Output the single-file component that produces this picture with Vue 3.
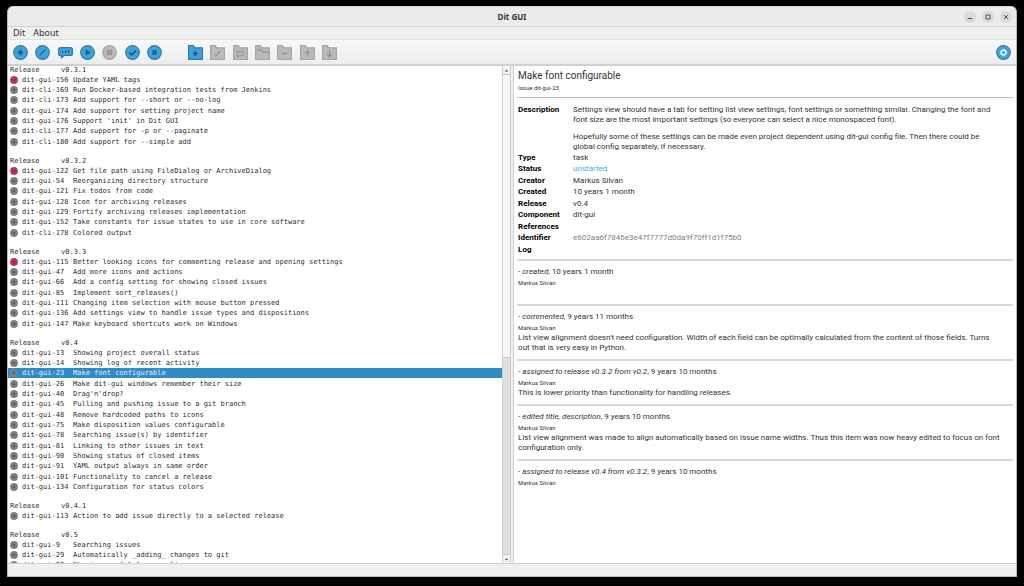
<script setup>
import { ref } from 'vue'

const selected = ref('dit-gui-23')

const releases = [
  { name: 'v0.3.1', issues: [
    ['dit-gui-156', 'Update YAML tags', true],
    ['dit-cli-169', 'Run Docker-based integration tests from Jenkins'],
    ['dit-cli-173', 'Add support for --short or --no-log'],
    ['dit-gui-174', 'Add support for setting project name'],
    ['dit-gui-176', "Support 'init' in Dit GUI"],
    ['dit-cli-177', 'Add support for -p or --paginate'],
    ['dit-cli-180', 'Add support for --simple add']
  ] },
  { name: 'v0.3.2', issues: [
    ['dit-gui-122', 'Get file path using FileDialog or ArchiveDialog', true],
    ['dit-gui-54', 'Reorganizing directory structure'],
    ['dit-gui-121', 'Fix todos from code'],
    ['dit-gui-128', 'Icon for archiving releases'],
    ['dit-gui-129', 'Fortify archiving releases implementation'],
    ['dit-gui-152', 'Take constants for issue states to use in core software'],
    ['dit-cli-178', 'Colored output']
  ] },
  { name: 'v0.3.3', issues: [
    ['dit-gui-115', 'Better looking icons for commenting release and opening settings', true],
    ['dit-gui-47', 'Add more icons and actions'],
    ['dit-gui-66', 'Add a config setting for showing closed issues'],
    ['dit-gui-85', 'Implement sort_releases()'],
    ['dit-gui-111', 'Changing item selection with mouse button pressed'],
    ['dit-gui-136', 'Add settings view to handle issue types and dispositions'],
    ['dit-gui-147', 'Make keyboard shortcuts work on Windows']
  ] },
  { name: 'v0.4', issues: [
    ['dit-gui-13', 'Showing project overall status'],
    ['dit-gui-14', 'Showing log of recent activity'],
    ['dit-gui-23', 'Make font configurable'],
    ['dit-gui-26', 'Make dit-gui windows remember their size'],
    ['dit-gui-40', "Drag'n'drop?"],
    ['dit-gui-45', 'Pulling and pushing issue to a git branch'],
    ['dit-gui-48', 'Remove hardcoded paths to icons'],
    ['dit-gui-75', 'Make disposition values configurable'],
    ['dit-gui-78', 'Searching issue(s) by identifier'],
    ['dit-gui-81', 'Linking to other issues in text'],
    ['dit-gui-90', 'Showing status of closed items'],
    ['dit-gui-91', 'YAML output always in same order'],
    ['dit-gui-101', 'Functionality to cancel a release'],
    ['dit-gui-134', 'Configuration for status colors']
  ] },
  { name: 'v0.4.1', issues: [
    ['dit-gui-113', 'Action to add issue directly to a selected release']
  ] },
  { name: 'v0.5', issues: [
    ['dit-gui-9', 'Searching issues'],
    ['dit-gui-29', 'Automatically _adding_ changes to git'],
    ['dit-gui-30', 'Showing useful log any lines']
  ] }
]

const fields = [
  ['Type', 'task'],
  ['Status', 'unstarted', 'link'],
  ['Creator', 'Markus Silvan'],
  ['Created', '10 years 1 month'],
  ['Release', 'v0.4'],
  ['Component', 'dit-gui'],
  ['References', ''],
  ['Identifier', 'e602aa6f7846e3e47f7777d0da9f70ff1d1f75b0', 'muted'],
  ['Log', '']
]

const log = [
  { action: 'created', age: '10 years 1 month', text: '' },
  { action: 'commented', age: '9 years 11 months', text: "List view alignment doesn't need configuration. Width of each field can be optimally calculated from the content of those fields. Turns\nout that is very easy in Python." },
  { action: 'assigned to release v0.3.2 from v0.2', age: '9 years 10 months', text: 'This is lower priority than functionality for handling releases.' },
  { action: 'edited title, description', age: '9 years 10 months', text: 'List view alignment was made to align automatically based on issue name widths. Thus this item was now heavy edited to focus on font\nconfiguration only.' },
  { action: 'assigned to release v0.4 from v0.3.2', age: '9 years 10 months', text: '' }
]

const issueTools = [
  { label: 'New issue', d: 'M7.5 4.8v5.4M4.8 7.5h5.4', w: 2 },
  { label: 'Edit issue', d: 'M4.6 10.4l5.8-5.8', w: 1.3 },
  { label: 'Comment issue', bubble: true },
  { label: 'Start work', fill: 'M5.6 4.4l5.2 3.1-5.2 3.1z' },
  { label: 'Stop work', fill: 'M4.8 4.8h5.4v5.4H4.8z', off: true },
  { label: 'Close issue', d: 'M4.3 7.6l2.3 2.2 4.2-4.2', w: 1.8 },
  { label: 'Drop issue', d: 'M5.5 5.5l4 4M9.5 5.5l-4 4', w: 2 }
]

const releaseTools = [
  { label: 'New release', d: 'M7.5 5.8v5.4M4.8 8.5h5.4', w: 1.6, on: true },
  { label: 'Edit release', d: 'M5 11.3l5.5-5.5', w: 1.2 },
  { label: 'Comment release', d: 'M4 6.3h7v4.4H6.2L4.8 12v-1.3H4zM5.5 8.5h.8M7.1 8.5h.8M8.7 8.5h.8', w: 0.9 },
  { label: 'Release', d: 'M1.5 5.2h5l1.6 2h6', w: 1.2 },
  { label: 'Remove release', d: 'M4.8 8.5h5.4', w: 1.5 },
  { label: 'Move up', d: 'M7.5 11.8V6M5.2 8.1l2.3-2.3 2.3 2.3', w: 1.2 },
  { label: 'Move down', d: 'M7.5 5.6v5.8M5.2 9.3l2.3 2.3 2.3-2.3', w: 1.2 }
]
</script>

<template>
  <div class="desktop">
    <div class="window">
      <header class="titlebar">
        <h1>Dit GUI</h1>
        <div class="controls">
          <button type="button" aria-label="Minimize"><svg viewBox="0 0 12 12"><path d="M3.7 7.5h4.6" /></svg></button>
          <button type="button" aria-label="Maximize"><svg viewBox="0 0 12 12"><path d="M4 4h4v4H4z" /></svg></button>
          <button type="button" aria-label="Close"><svg viewBox="0 0 12 12"><path d="M4 4l4 4M8 4l-4 4" /></svg></button>
        </div>
      </header>

      <nav class="menubar">
        <button type="button">Dit</button>
        <button type="button">About</button>
      </nav>

      <div class="toolbar">
        <div class="tools">
          <button v-for="t in issueTools" :key="t.label" type="button" :aria-label="t.label" :disabled="t.off">
            <svg viewBox="0 0 15 15" :class="['round', { off: t.off }]">
              <template v-if="t.bubble">
                <path class="shape" d="M2.7 2.6h9.6q2.2 0 2.2 2.2v3.4q0 2.2-2.2 2.2H6.4l-3 2.3.3-2.3h-1Q.5 10.4.5 8.2V4.8Q.5 2.6 2.7 2.6z" />
                <path class="solid" d="M3.6 5.8h1.7v1.6H3.6zM6.7 5.8h1.7v1.6H6.7zM9.8 5.8h1.7v1.6H9.8z" />
              </template>
              <template v-else>
                <circle class="shape" cx="7.5" cy="7.5" r="6.8" />
                <path v-if="t.fill" class="solid" :d="t.fill" />
                <path v-else class="mark" :d="t.d" :stroke-width="t.w" />
              </template>
            </svg>
          </button>
        </div>
        <div class="tools">
          <button v-for="t in releaseTools" :key="t.label" type="button" :aria-label="t.label" :disabled="!t.on">
            <svg viewBox="0 0 15 15" :class="['folder', { off: !t.on }]">
              <path class="shape" d="M.6 14.4V.7h4.7l1.4 2.1h7.7v11.6z" />
              <path class="mark" :d="t.d" :stroke-width="t.w" />
            </svg>
          </button>
        </div>
        <button class="settings" type="button" aria-label="Settings">
          <svg viewBox="0 0 15 15" class="round">
            <circle class="shape" cx="7.5" cy="7.5" r="6.8" />
            <circle class="gear" cx="7.5" cy="7.5" r="2.3" stroke-width="1.5" />
            <circle class="gear" cx="7.5" cy="7.5" r="3.3" stroke-width="1" stroke-dasharray="1.4 1.19" />
          </svg>
        </button>
      </div>

      <main class="panes">
        <div class="list">
          <section v-for="r in releases" :key="r.name" class="group">
            <h2><span>Release</span>{{ r.name }}</h2>
            <ul>
              <li v-for="[id, title, started] in r.issues" :key="id">
                <button type="button" :class="['row', { current: id === selected }]" @click="selected = id">
                  <svg viewBox="0 0 8 8" :class="['dot', { started }]">
                    <circle cx="4" cy="4" r="3.9" />
                    <path v-if="started" d="M2.3 3h3.4M2.3 5h3.4" />
                    <path v-else d="M4 2.5v3M2.5 4h3" />
                  </svg>
                  <span class="id">{{ id }}</span>
                  <span>{{ title }}</span>
                </button>
              </li>
            </ul>
          </section>
        </div>

        <div class="scrollbar">
          <button type="button" aria-label="Scroll up"><svg viewBox="0 0 8 8"><path d="M2 5l2-2 2 2z" /></svg></button>
          <div class="track"><div class="thumb"></div></div>
          <button type="button" aria-label="Scroll down"><svg viewBox="0 0 8 8"><path d="M2 3l2 2 2-2z" /></svg></button>
        </div>
        <div class="splitter"></div>

        <article class="detail">
          <h2>Make font configurable</h2>
          <p class="issue">Issue dit-gui-23</p>
          <dl>
            <div class="description">
              <dt>Description</dt>
              <dd>
                <p>Settings view should have a tab for setting list view settings, font settings or something similar. Changing the font and<br>font size are the most important settings (so everyone can select a nice monospaced font).</p>
                <p>Hopefully some of these settings can be made even project dependent using dit-gui config file. Then there could be<br>global config separately, if necessary.</p>
              </dd>
            </div>
            <div v-for="[name, value, kind] in fields" :key="name">
              <dt>{{ name }}</dt>
              <dd :class="kind">{{ value }}</dd>
            </div>
          </dl>
          <section v-for="e in log" :key="e.action" class="entry">
            <p class="head">- <em>{{ e.action }}</em>, {{ e.age }}</p>
            <p class="author">Markus Silvan</p>
            <p class="body">{{ e.text }}</p>
          </section>
        </article>
      </main>

      <footer class="statusbar"></footer>
    </div>
  </div>
</template>

<style>
body {
  margin: 0;
  background: #000;
}
</style>

<style scoped>
* {
  box-sizing: border-box;
  margin: 0;
  padding: 0;
}

button {
  border: 0;
  background: none;
  color: inherit;
  font: inherit;
}

svg {
  display: block;
  fill: none;
}

ul {
  list-style: none;
}

.desktop {
  height: 100vh;
  padding: 6px 7px 9px;
  background: #000;
  color: #333;
  font: 8px/10px "Noto Sans", "Open Sans", sans-serif;
}

.window {
  display: flex;
  flex-direction: column;
  height: 100%;
  overflow: hidden;
  border: 1px solid #b8b8b8;
  border-top-color: #d8d8d8;
  border-radius: 6px 6px 0 0;
  background: #efefef;
}

.titlebar {
  display: grid;
  grid-template-columns: 1fr auto 1fr;
  align-items: center;
  height: 20px;
  border-bottom: 1px solid #d2d2d2;
  background: #ebebeb;
}

.titlebar h1 {
  grid-column: 2;
  font-size: 8px;
  font-weight: 700;
}

.controls {
  display: flex;
  justify-content: flex-end;
  gap: 6px;
  padding-right: 4px;
}

.controls button {
  width: 12px;
  height: 12px;
  border-radius: 50%;
  background: #dadada;
}

.controls path {
  stroke: #555;
  stroke-width: 1;
}

.menubar {
  display: flex;
  gap: 8px;
  height: 13px;
  padding-left: 5px;
  border-bottom: 1px solid #dedede;
  font-size: 9px;
  line-height: 12px;
}

.toolbar {
  display: flex;
  align-items: center;
  gap: 26px;
  height: 26px;
  padding: 0 5px;
  border-bottom: 2px solid #d0d0d0;
  background: linear-gradient(#f8f8f8, #ededed);
}

.tools {
  display: flex;
  justify-content: space-between;
  width: 149px;
}

.toolbar svg {
  width: 15px;
  height: 15px;
}

.settings {
  margin-left: auto;
}

.shape {
  fill: #3ca4dc;
  stroke: #2f7ba6;
  stroke-width: 1.2;
}

.mark {
  stroke: #205c80;
}

.solid {
  fill: #205c80;
}

.off .shape {
  fill: #bababa;
  stroke: #a6a6a6;
}

.off .mark {
  stroke: #929292;
}

.off .solid {
  fill: #999;
}

.gear {
  stroke: #e8f3fa;
}

.panes {
  display: grid;
  grid-template-columns: minmax(0, 63fr) 8px 4px minmax(0, 64fr);
  flex: 1;
  min-height: 0;
}

.list {
  overflow: hidden;
  background: #fff;
  color: #2e2e2e;
  font: 7px/10px "DejaVu Sans Mono", monospace;
}

.group {
  margin-bottom: 10px;
}

.group h2 {
  display: flex;
  padding-left: 2px;
  font: inherit;
  line-height: 9px;
}

.group h2 span {
  width: 51px;
}

.row {
  display: flex;
  align-items: center;
  width: 100%;
  height: 10px;
  padding-left: 2px;
  text-align: left;
  white-space: pre;
}

li:nth-child(3n) {
  padding-bottom: 1px;
}

.row.current {
  background: #308cc6;
  color: #e2eff8;
}

.dot {
  width: 8px;
  height: 8px;
  margin-right: 4px;
}

.dot circle {
  fill: #808080;
}

.dot path {
  stroke: #555;
  stroke-width: 1;
}

.dot.started circle {
  fill: #b83a5b;
}

.dot.started path {
  stroke: #852842;
}

.id {
  width: 51px;
}

.scrollbar {
  display: flex;
  flex-direction: column;
  border-left: 1px solid #cfcfcf;
  background: #f2f2f2;
}

.scrollbar button {
  width: 7px;
  height: 8px;
}

.scrollbar path {
  fill: #444;
}

.track {
  flex: 1;
  border: solid #c4c4c4;
  border-width: 1px 0;
  background: #e0e0e0;
}

.thumb {
  height: 59%;
  border-bottom: 1px solid #c4c4c4;
  background: linear-gradient(90deg, #fbfbfb, #f2f2f2);
}

.splitter {
  border: solid #cfcfcf;
  border-width: 0 1px;
}

.detail {
  overflow: hidden;
  padding: 3px 3px 0;
  background: #fff;
  font-family: Roboto, "Noto Sans", sans-serif;
}

.detail h2 {
  padding-left: 1px;
  font-size: 10px;
  font-weight: 400;
  line-height: 13px;
}

.issue {
  padding: 0 1px 3px;
  border-bottom: 1px solid #bdbdbd;
  font-size: 6px;
  line-height: 12px;
}

dl {
  padding: 7px 1px 4px;
}

dl > div {
  display: grid;
  grid-template-columns: 55px minmax(0, 1fr);
  line-height: 11px;
}

dl > div:nth-child(2n + 3) {
  padding-bottom: 1px;
}

dl > .description {
  line-height: 10px;
}

dt {
  color: #000;
  font-weight: 700;
}

dd p + p {
  margin-top: 7px;
}

.link {
  color: #3daef5;
}

.muted {
  color: #808080;
}

.entry {
  padding: 6px 1px;
  border-top: 2px solid #d8d8d8;
}

.author {
  font-size: 6px;
  line-height: 11px;
}

.body {
  min-height: 10px;
  white-space: pre-line;
}

.statusbar {
  height: 13px;
  border-top: 1px solid #cfcfcf;
}
</style>
